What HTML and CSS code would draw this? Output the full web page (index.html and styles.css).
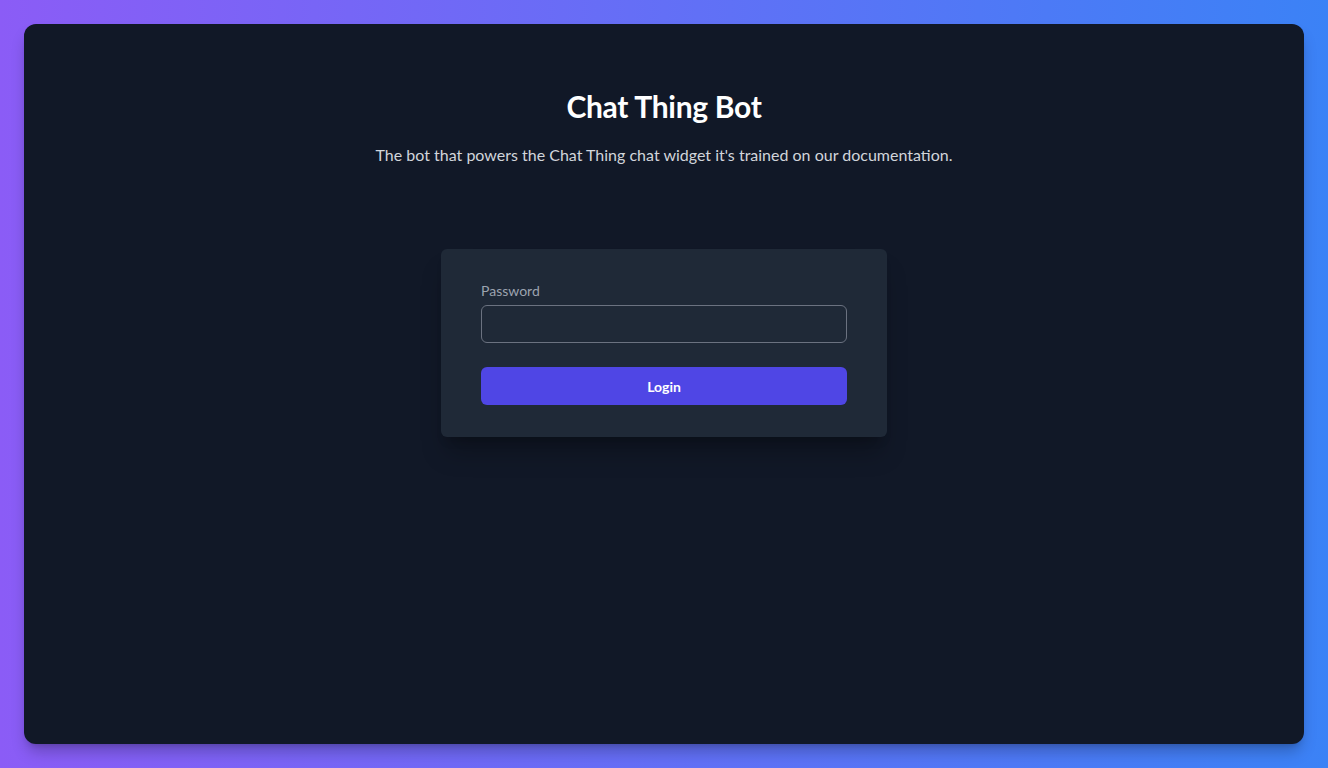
FILE: index.html
```html
<!DOCTYPE html>
<html lang="en">
<head>
<meta charset="utf-8">
<title>Chat Thing Bot</title>
<link rel="stylesheet" href="styles.css">
</head>
<body>
<div class="frame">
  <main class="panel">
    <header class="intro">
      <h1 class="title">Chat Thing Bot</h1>
      <p class="subtitle">The bot that powers the Chat Thing chat widget it's trained on our documentation.</p>
    </header>
    <form class="card">
      <label class="label" for="pw">Password</label>
      <input class="input" id="pw" type="password">
      <button class="button" type="button">Login</button>
    </form>
  </main>
</div>
</body>
</html>
```

FILE: styles.css
```css
* { box-sizing: border-box; }
html, body { margin: 0; height: 100%; }
body {
  font-family: Lato, "Noto Sans", sans-serif;
  background: linear-gradient(90deg, #8b5cf6, #3b82f6);
}
.frame {
  height: 100%;
  padding: 24px;
  display: flex;
}
.panel {
  flex: 1;
  background: #111827;
  border-radius: 12px;
  box-shadow: 0 10px 15px -3px rgba(0,0,0,0.25), 0 4px 6px -4px rgba(0,0,0,0.2);
  display: flex;
  flex-direction: column;
  align-items: center;
  padding-top: 64px;
}
.intro { text-align: center; }
.title {
  margin: 0;
  font-size: 30px;
  line-height: 36px;
  font-weight: 700;
  letter-spacing: -0.3px;
  color: #ffffff;
}
.subtitle {
  margin: 19px 0 0;
  font-size: 16px;
  line-height: 24px;
  color: #d1d5db;
}
.card {
  margin-top: 82px;
  width: 446px;
  background: #1f2937;
  border-radius: 6px;
  padding: 32px 40px;
  display: flex;
  flex-direction: column;
  box-shadow: 0 20px 25px -5px rgba(0,0,0,0.25), 0 8px 10px -6px rgba(0,0,0,0.2);
}
.label {
  font-size: 14px;
  line-height: 20px;
  color: #9ca3af;
  margin-bottom: 4px;
}
.input {
  height: 38px;
  background: #1f2937;
  border: 1px solid #6b7280;
  border-radius: 6px;
  color: #fff;
  font: inherit;
  padding: 0 12px;
}
.button {
  margin-top: 24px;
  height: 38px;
  background: #4f46e5;
  border: 0;
  border-radius: 6px;
  color: #fff;
  font: inherit;
  font-size: 14px;
  font-weight: 700;
}
```
